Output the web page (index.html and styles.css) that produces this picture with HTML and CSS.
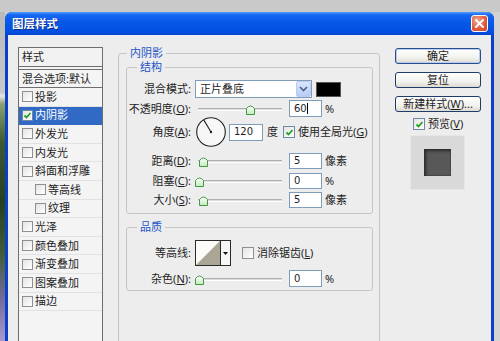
FILE: index.html
```html
<!DOCTYPE html>
<html lang="zh">
<head>
<meta charset="utf-8">
<title>图层样式</title>
<link rel="stylesheet" href="styles.css">
</head>
<body>
<div class="screen">
  <div class="topstrip"></div>
  <div class="desk">
    <div class="photo"></div>
    <div class="window">
      <div class="titlebar">
        <span class="title">图层样式</span>
        <span class="close"><svg width="17" height="17" viewBox="0 0 17 17"><path d="M5 5 L12 12 M12 5 L5 12" stroke="#fff" stroke-width="2" stroke-linecap="round"/></svg></span>
      </div>
      <div class="frame">
        <div class="panel">
          <div class="panel-head">样式</div>
          <div class="panel-blend">混合选项:默认</div>
          <div class="item"><span class="cb"></span>投影</div>
          <div class="item selected"><span class="cb on"><svg width="9" height="9" viewBox="0 0 9 9"><path d="M1.5 4.5 L3.5 6.5 L7.5 2" stroke="#21a121" stroke-width="1.8" fill="none"/></svg></span>内阴影</div>
          <div class="item"><span class="cb"></span>外发光</div>
          <div class="item"><span class="cb"></span>内发光</div>
          <div class="item"><span class="cb"></span>斜面和浮雕</div>
          <div class="item sub"><span class="cb"></span>等高线</div>
          <div class="item sub"><span class="cb"></span>纹理</div>
          <div class="item"><span class="cb"></span>光泽</div>
          <div class="item"><span class="cb"></span>颜色叠加</div>
          <div class="item"><span class="cb"></span>渐变叠加</div>
          <div class="item"><span class="cb"></span>图案叠加</div>
          <div class="item"><span class="cb"></span>描边</div>
          <div class="item last"></div>
        </div>

        <fieldset class="group outer">
          <legend>内阴影</legend>
          <fieldset class="group inner structure">
            <legend>结构</legend>
            <div class="row r-blend">
              <span class="lbl">混合模式:</span>
              <span class="select"><span class="sel-text">正片叠底</span><span class="sel-btn"><svg width="9" height="6" viewBox="0 0 9 6"><path d="M1 1 L4.5 4.5 L8 1" stroke="#4d6185" stroke-width="1.6" fill="none"/></svg></span></span>
              <span class="swatch"></span>
            </div>
            <div class="row r-opacity">
              <span class="lbl">不透明度(<u>O</u>):</span>
              <span class="slider"><span class="track"></span><span class="thumb" style="left:51px"><svg width="9" height="11" viewBox="0 0 9 11"><defs><linearGradient id="tg" x1="0" y1="0" x2="0" y2="1"><stop offset="0" stop-color="#ffffff"/><stop offset="1" stop-color="#c6e8c0"/></linearGradient></defs><path d="M0.5 10.5 L0.5 4.5 Q4.5 -0.5 8.5 4.5 L8.5 10.5 Z" fill="url(#tg)" stroke="#3f9a3f"/></svg></span></span>
              <span class="field">60<span class="caret"></span></span>
              <span class="unit">%</span>
            </div>
            <div class="row r-angle">
              <span class="lbl">角度(<u>A</u>):</span>
              <span class="dial"><svg width="30" height="30" viewBox="0 0 30 30"><circle cx="15" cy="15" r="14.3" fill="#f7f7f7" stroke="#222" stroke-width="1.1"/><path d="M15 15 L7.6 2.6" stroke="#222" stroke-width="1.1"/><circle cx="15" cy="15" r="1.2" fill="#222"/></svg></span>
              <span class="field wide">120</span>
              <span class="unit deg">度</span>
              <span class="cb on"><svg width="9" height="9" viewBox="0 0 9 9"><path d="M1.5 4.5 L3.5 6.5 L7.5 2" stroke="#21a121" stroke-width="1.8" fill="none"/></svg></span>
              <span class="cbtext">使用全局光(<u>G</u>)</span>
            </div>
            <div class="row r-dist">
              <span class="lbl">距离(<u>D</u>):</span>
              <span class="slider"><span class="track"></span><span class="thumb" style="left:4px"><svg width="9" height="11" viewBox="0 0 9 11"><path d="M0.5 10.5 L0.5 4.5 Q4.5 -0.5 8.5 4.5 L8.5 10.5 Z" fill="url(#tg)" stroke="#3f9a3f"/></svg></span></span>
              <span class="field">5</span>
              <span class="unit">像素</span>
            </div>
            <div class="row r-choke">
              <span class="lbl">阻塞(<u>C</u>):</span>
              <span class="slider"><span class="track"></span><span class="thumb" style="left:0px"><svg width="9" height="11" viewBox="0 0 9 11"><path d="M0.5 10.5 L0.5 4.5 Q4.5 -0.5 8.5 4.5 L8.5 10.5 Z" fill="url(#tg)" stroke="#3f9a3f"/></svg></span></span>
              <span class="field">0</span>
              <span class="unit">%</span>
            </div>
            <div class="row r-size">
              <span class="lbl">大小(<u>S</u>):</span>
              <span class="slider"><span class="track"></span><span class="thumb" style="left:4px"><svg width="9" height="11" viewBox="0 0 9 11"><path d="M0.5 10.5 L0.5 4.5 Q4.5 -0.5 8.5 4.5 L8.5 10.5 Z" fill="url(#tg)" stroke="#3f9a3f"/></svg></span></span>
              <span class="field">5</span>
              <span class="unit">像素</span>
            </div>
          </fieldset>

          <fieldset class="group inner quality">
            <legend>品质</legend>
            <div class="row r-contour">
              <span class="lbl">等高线:</span>
              <span class="contour"><span class="contour-img"><svg width="24" height="24" viewBox="0 0 24 24"><rect width="24" height="24" fill="#fbfbf8"/><path d="M0 24 L24 0 L24 24 Z" fill="#aba596"/></svg></span><span class="contour-btn"><svg width="5" height="3" viewBox="0 0 5 3"><path d="M0 0 L5 0 L2.5 3 Z" fill="#111"/></svg></span></span>
              <span class="cb aa"></span>
              <span class="cbtext">消除锯齿(<u>L</u>)</span>
            </div>
            <div class="row r-noise">
              <span class="lbl">杂色(<u>N</u>):</span>
              <span class="slider"><span class="track"></span><span class="thumb" style="left:0px"><svg width="9" height="11" viewBox="0 0 9 11"><path d="M0.5 10.5 L0.5 4.5 Q4.5 -0.5 8.5 4.5 L8.5 10.5 Z" fill="url(#tg)" stroke="#3f9a3f"/></svg></span></span>
              <span class="field">0</span>
              <span class="unit">%</span>
            </div>
          </fieldset>
        </fieldset>

        <div class="actions">
          <div class="btn b-ok">确定</div>
          <div class="btn">复位</div>
          <div class="btn">新建样式(<u>W</u>)...</div>
          <div class="preview-check"><span class="cb on"><svg width="9" height="9" viewBox="0 0 9 9"><path d="M1.5 4.5 L3.5 6.5 L7.5 2" stroke="#21a121" stroke-width="1.8" fill="none"/></svg></span><span class="cbtext">预览(<u>V</u>)</span></div>
          <div class="preview"><div class="preview-sq"></div></div>
        </div>
      </div>
    </div>
    <div class="rightstrip"></div>
  </div>
</div>
</body>
</html>
```
FILE: styles.css
```css
* { box-sizing: border-box; }
html, body { margin: 0; padding: 0; }
body {
  width: 500px;
  height: 341px;
  overflow: hidden;
  background: #cfcfcf;
  font-family: "Noto Sans", "Noto Sans CJK SC", sans-serif;
  font-size: 11px;
  line-height: 12px;
  color: #1e1e1e;
}
u { text-decoration: underline; text-underline-offset: 1px; }
.screen { width: 500px; height: 341px; display: flex; flex-direction: column; }
.topstrip { height: 12px; background: #c9c9c9; flex: none; }
.desk { flex: 1; display: flex; min-height: 0; }
.photo {
  width: 5px;
  flex: none;
  background: linear-gradient(to bottom, #b9b9b9 0, #c8c8c8 80px, #e6e6e6 84px, #8aa070 92px, #3c5a30 130px, #26401f 190px, #3e5c34 240px, #6f6a98 285px, #a898d0 329px);
}
.rightstrip { width: 6px; flex: none; background: #d3d3d3; }
.window {
  width: 489px;
  flex: none;
  display: flex;
  flex-direction: column;
  border-radius: 7px 7px 0 0;
  overflow: hidden;
  background: #0b3fc8;
}
.titlebar {
  height: 23px;
  flex: none;
  display: flex;
  align-items: center;
  justify-content: space-between;
  padding: 0 6px 0 7px;
  background: linear-gradient(to bottom, #4f9cff 0, #1466f2 3px, #0858e8 10px, #0452e4 18px, #0346d2 23px);
}
.title {
  color: #fff;
  font-weight: bold;
  font-size: 11.5px;
  text-shadow: 1px 1px 0 #0a2a8a;
  letter-spacing: 0;
}
.close {
  width: 17px;
  height: 17px;
  border-radius: 3px;
  border: 1px solid #fff;
  background: radial-gradient(circle at 35% 30%, #f2a58c, #e2583a 60%, #c9401f);
  display: flex;
}
.close svg { margin: -1px; }
.frame {
  flex: 1;
  display: flex;
  align-items: flex-start;
  background: #ededed;
  border-left: 3px solid #0b3fc8;
  border-right: 3px solid #0b3fc8;
  padding-top: 12px;
  overflow: hidden;
}

/* left panel */
.panel {
  width: 85px;
  height: 320px;
  margin-left: 10px;
  flex: none;
  border: 1px solid #6e6e6e;
  background: #f4f4f4;
}
.panel-head {
  height: 19px;
  border-bottom: 1px solid #6e6e6e;
  padding: 3px 0 0 3px;
  background: #f2f2f2;
}
.panel-blend {
  height: 19px;
  margin-top: 2px;
  border-top: 1px solid #6e6e6e;
  border-bottom: 1px solid #6e6e6e;
  padding: 3px 0 0 3px;
  white-space: nowrap;
}
.item {
  height: 18.6px;
  display: flex;
  align-items: center;
  padding-left: 3px;
  border-bottom: 1px solid #e2e2e2;
  white-space: nowrap;
}
.item .cb { margin-right: 2px; }
.item.sub { padding-left: 16px; }
.item.selected { background: #316ac5; color: #fff; border-bottom-color: #316ac5; }
.item.last { border-bottom: none; }

.cb {
  width: 12px;
  height: 12px;
  flex: none;
  border: 1px solid #8c8f94;
  background: linear-gradient(135deg, #e4e4e0, #ffffff);
  display: inline-flex;
  align-items: center;
  justify-content: center;
}
.item .cb { width: 11px; height: 11px; }
.cb.on { border-color: #6f8aa8; }

/* groups */
fieldset.group {
  margin: 0;
  padding: 0;
  border: 1px solid #c6c6c6;
  border-radius: 3px;
  min-width: 0;
}
fieldset.group legend {
  padding: 0 3px;
  line-height: 12px;
  height: 12px;
  color: #1a55c8;
  font-size: 11px;
}
.outer {
  width: 262px;
  height: 320px;
  margin-left: 15px !important;
  flex: none;
}
.outer > legend { margin-left: 8px; }
.outer > .inner {
  width: 247px;
  margin-left: 7px;
}
.inner > legend { margin-left: 10px; }
.structure { margin-top: 2px !important; padding-bottom: 5px !important; }
.quality { margin-top: 7px !important; padding-bottom: 3px !important; }

.row { display: flex; align-items: center; white-space: nowrap; }
.lbl { width: 64px; flex: none; text-align: right; margin-right: 4px; }
.r-blend { height: 18px; margin-top: 7px; }
.r-opacity { height: 17px; margin-top: 2px; }
.r-angle { height: 30px; }
.r-dist { height: 16px; margin-top: 6px; }
.r-choke { height: 16px; margin-top: 4px; }
.r-size { height: 16px; margin-top: 3px; }
.r-contour { height: 26px; margin-top: 7px; }
.r-noise { height: 17px; margin-top: 4px; }

.select {
  width: 117px;
  height: 18px;
  flex: none;
  border: 1px solid #7f9db9;
  background: #fff;
  display: flex;
  align-items: center;
}
.sel-text { flex: 1; padding-left: 4px; }
.sel-btn {
  width: 15px;
  height: 16px;
  margin-right: 0;
  border-radius: 2px;
  background: linear-gradient(to bottom, #dbe6fe, #b7cbf7);
  border: 1px solid #b9cbf3;
  display: flex;
  align-items: center;
  justify-content: center;
}
.swatch {
  width: 25px;
  height: 15px;
  flex: none;
  margin-left: 4px;
  background: #000;
  border: 1px solid #555;
}

.slider {
  width: 90px;
  height: 14px;
  flex: none;
  position: relative;
}
.track {
  position: absolute;
  left: 3px;
  right: 3px;
  top: 6px;
  height: 3px;
  border-top: 1px solid #b0b0b0;
  border-bottom: 1px solid #ffffff;
  background: #dcdcdc;
}
.thumb { position: absolute; top: 2px; width: 9px; height: 11px; display: flex; }

.field {
  width: 33px;
  height: 100%;
  flex: none;
  margin-left: 4px;
  border: 1px solid #7f9db9;
  background: #fff;
  padding-left: 4px;
  display: flex;
  align-items: center;
  font-family: "DejaVu Sans", sans-serif;
  font-size: 10px;
}
.caret { width: 1px; height: 11px; background: #000; margin-left: 0; }
.r-angle .field { height: 17px; }
.field.wide { width: 34px; margin-left: 3px; }
.unit { margin-left: 3px; }
.unit.deg { margin-left: 4px; margin-right: 5px; }
.cbtext { margin-left: 3px; }
.dial { width: 30px; height: 30px; margin-left: 1px; flex: none; display: flex; }

.contour {
  width: 36px;
  height: 26px;
  flex: none;
  border: 1px solid #2a2a2a;
  display: flex;
  background: #fff;
}
.contour-img { width: 24px; height: 24px; display: flex; }
.contour-btn {
  flex: 1;
  border-left: 1px solid #2a2a2a;
  background: #f6f6f6;
  display: flex;
  align-items: center;
  justify-content: center;
}
.cb.aa { margin-left: 11px; }

/* right actions */
.actions {
  width: 86px;
  flex: none;
  margin-left: 15px;
  display: flex;
  flex-direction: column;
}
.btn {
  height: 16px;
  border: 1px solid #1f3c6a;
  border-radius: 3px;
  background: linear-gradient(to bottom, #ffffff, #f2f2ee 60%, #dedbd2);
  display: flex;
  align-items: center;
  justify-content: center;
  margin-top: 8px;
  white-space: nowrap;
}
.btn.b-ok { margin-top: 1px; border-color: #2a4d8e; box-shadow: inset 0 0 0 1px #b6cdf3; }
.preview-check {
  height: 14px;
  margin-top: 5px;
  margin-left: 18px;
  display: flex;
  align-items: center;
}
.preview {
  width: 55px;
  height: 55px;
  margin-top: 4px;
  margin-left: 15px;
  background: #d9d9d9;
  border: 1px solid #e6e6e6;
  display: flex;
  align-items: center;
  justify-content: center;
}
.preview-sq {
  width: 27px;
  height: 27px;
  background: #585858;
  box-shadow: inset 2px 2px 3px #2a2a2a, inset -1px -1px 1px #4a4a4a;
}
```
